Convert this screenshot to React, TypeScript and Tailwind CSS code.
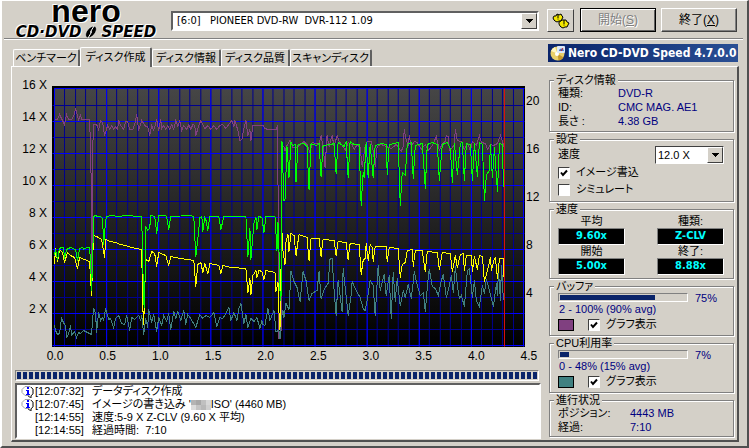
import type { ReactNode } from "react";

const tabs = [
  { label: "ベンチマーク", width: "w-[67px]" },
  { label: "ディスク作成", width: "w-[72px]", active: true },
  { label: "ディスク情報", width: "w-[69px]" },
  { label: "ディスク品質", width: "w-[69px]" },
  { label: "スキャンディスク", width: "w-[82px]" },
];

const speedLabels = ["16 X", "14 X", "12 X", "10 X", "8 X", "6 X", "4 X", "2 X"];
const rpmLabels = ["20", "16", "12", "8", "4"];
const sizeLabels = ["0.0", "0.5", "1.0", "1.5", "2.0", "2.5", "3.0", "3.5", "4.0", "4.5"];

const bufferLine =
  "54,119 57,119 59,114 61,118 64,124 66,114 68,119 71,119 73,116 75,108 77,116 78,119 80,115 81,119 89,119 90,148 91,206 91,280 92,280 92,152 93,124 96,124 98,129 100,120 102,122 104,135 107,125 109,129 111,125 113,129 115,126 117,129 118,120 120,125 123,129 125,121 127,121 129,129 132,129 134,124 136,114 138,130 141,120 143,123 145,126 147,126 149,135 151,125 153,130 156,119 158,130 160,119 161,128 163,125 165,129 167,125 169,129 171,124 173,129 175,120 177,126 179,120 181,130 183,125 186,129 188,124 190,129 192,124 194,125 195,135 198,125 200,120 202,124 204,128 207,125 210,129 213,125 216,129 219,125 222,124 225,128 228,124 231,120 233,126 234,120 237,130 239,140 241,139 243,128 245,120 247,135 249,129 250,140 252,125 262,125 264,128 267,129 275,129 277,125 277,178 278,338 280,338 281,145 283,146 284,150 286,145 289,140 292,147 296,147 299,144 303,141 306,144 309,152 311,142 315,143 318,144 320,135 322,146 324,167 326,135 328,146 331,135 333,146 336,135 338,141 342,146 344,150 347,142 351,144 353,149 356,144 359,147 361,166 364,146 366,141 370,141 372,150 374,166 376,146 380,144 385,146 390,148 395,144 400,151 402,146 403,129 405,140 407,144 408,135 410,146 413,141 416,142 420,149 424,144 427,150 431,145 435,136 438,150 441,143 444,141 445,135 447,136 448,150 451,147 453,144 454,129 456,140 460,141 463,149 466,143 469,150 471,141 475,145 478,135 480,142 484,143 486,149 489,144 492,145 496,143 499,135 501,141 503,148";

const writeLine =
  "54,255 55,249 57,259 59,248 61,247 63,247 64,258 66,249 70,247 75,249 77,260 79,248 82,247 83,249 86,247 89,247 90,262 91,290 92,262 93,216 95,215 97,216 100,216 102,218 103,244 105,220 106,216 110,215 119,216 124,215 141,216 142,260 143,303 144,307 145,226 147,230 149,228 150,215 154,216 156,233 158,215 165,215 166,217 168,229 170,216 190,215 193,216 195,256 198,229 199,217 201,216 202,231 204,217 205,219 207,230 209,216 218,216 220,229 223,216 245,216 247,256 249,228 250,259 253,223 255,217 256,229 258,216 261,217 263,232 265,216 274,216 276,250 277,222 278,250 279,290 280,300 281,141 282,172 283,200 284,199 286,146 288,177 290,142 292,145 294,144 295,181 297,144 303,143 306,146 308,189 310,143 315,145 318,143 320,176 322,145 330,144 333,143 335,173 337,142 343,146 345,141 347,177 349,141 353,144 358,144 360,205 362,172 363,177 365,142 367,177 369,144 372,177 374,145 380,143 385,144 386,174 388,144 393,143 397,142 399,205 401,172 404,175 406,144 410,142 412,178 414,145 421,143 424,188 426,144 431,142 436,144 438,180 441,144 446,142 449,148 451,182 453,143 456,174 459,143 461,142 463,180 465,143 469,144 471,180 473,143 476,176 478,142 481,144 483,200 485,174 488,170 489,144 491,177 493,147 496,191 498,143 501,144 502,187";

const rpmLine =
  "54,264 55,248 57,261 59,249 62,252 64,262 67,252 70,255 74,257 77,268 79,257 84,259 89,261 91,295 92,260 93,235 96,236 101,239 104,257 105,239 110,241 115,242 120,244 128,246 135,248 141,249 142,305 143,324 145,259 148,261 151,251 154,253 156,266 158,252 165,255 168,265 170,256 180,258 193,260 195,286 197,264 200,262 202,272 204,263 207,273 209,263 214,264 218,265 220,273 222,265 230,267 245,268 247,292 249,278 250,294 252,275 255,270 256,277 258,270 261,271 263,279 265,270 274,272 275,291 277,282 278,312 279,329 280,270 281,232 282,250 284,264 285,242 287,234 288,251 290,233 293,235 295,255 298,234 306,237 308,260 310,238 318,238 320,256 322,239 333,240 335,255 337,241 345,242 347,259 349,243 358,244 360,274 362,260 364,258 365,243 367,260 369,244 371,247 372,261 374,246 385,246 386,261 388,247 397,248 399,277 401,264 404,262 406,250 411,249 412,266 414,250 421,250 424,271 426,251 436,252 438,269 441,252 449,253 451,271 454,255 456,267 459,254 462,253 463,270 465,255 470,255 471,271 473,256 476,269 478,255 481,256 483,281 486,270 487,266 489,257 490,270 493,258 494,257 496,278 498,258 502,258 502,276";

const cpuLine =
  "54,325 55,330 57,334 59,333 61,318 64,324 65,325 66,337 68,334 70,325 71,335 74,331 76,337 78,332 80,333 83,330 87,332 91,334 92,320 93,308 95,313 96,332 98,312 100,320 102,317 103,320 105,308 108,319 110,318 113,327 115,318 118,315 121,323 124,324 126,315 129,330 131,317 134,319 138,315 140,320 141,315 143,334 145,318 147,327 148,309 151,322 153,314 156,331 158,317 161,325 163,315 166,321 168,313 170,329 173,311 175,318 177,311 180,320 183,310 185,324 187,314 190,318 195,327 199,314 202,318 205,315 209,317 213,312 216,326 219,317 222,318 225,313 228,307 230,320 233,312 236,320 238,308 240,303 243,323 245,314 247,327 250,318 253,321 256,317 259,328 261,320 262,324 264,325 267,308 269,320 273,310 275,331 278,330 279,338 280,320 282,310 283,317 285,303 288,309 290,271 293,281 296,287 299,301 302,271 305,280 308,300 311,293 316,290 318,271 320,298 323,289 327,283 329,258 331,258 333,290 335,315 337,280 339,295 341,311 342,268 345,295 347,315 350,295 351,281 355,290 359,297 362,308 364,310 366,300 369,280 372,285 374,315 377,265 379,290 383,274 385,295 388,275 390,318 392,272 394,301 396,278 399,305 402,290 404,297 407,284 410,298 412,281 413,271 416,285 419,295 422,292 424,311 427,276 428,269 431,286 434,288 437,295 440,280 442,274 445,297 448,285 450,275 452,292 454,266 456,285 458,298 460,295 463,306 466,270 468,268 471,297 473,280 475,300 478,306 481,285 483,293 485,279 488,290 492,306 495,283 496,295 497,270 499,300 500,265 502,300";

function range(count: number) {
  return Array.from({ length: count }, (_, i) => i);
}

const minorGrid = [
  ...range(46).map((i) => `M${54 + Math.round(i * 10.4)} 88v258`),
  ...range(8).map((i) => `M52 ${105 + i * 32}h471`),
].join("");

const majorGrid = [
  ...range(10).map((i) => `M${54 + i * 52} 88v258`),
  ...range(8).map((i) => `M52 ${121 + i * 32}h471`),
  "M54 88h469",
].join("");

function SpeedChart() {
  return (
    <svg
      viewBox="52 86 472 261"
      preserveAspectRatio="none"
      shapeRendering="crispEdges"
      className="block h-[261px] w-full"
      role="img"
      aria-label="速度グラフ"
    >
      <defs>
        <linearGradient id="plot" x1="0" y1="0" x2="0" y2="1">
          <stop offset="0" stopColor="#464646" />
          <stop offset="1" stopColor="#000" />
        </linearGradient>
      </defs>
      <rect x="52" y="86" width="472" height="261" fill="#000" />
      <rect x="54" y="88" width="469" height="258" fill="url(#plot)" />
      <g fill="none" strokeWidth="1" transform="translate(0.5 0.5)">
        <path d={minorGrid} stroke="#000090" vectorEffect="non-scaling-stroke" />
        <path d={majorGrid} stroke="#0000ff" vectorEffect="non-scaling-stroke" />
        <polyline points={bufferLine} stroke="#804080" />
        <polyline points={cpuLine} stroke="#408080" />
        <polyline points={rpmLine} stroke="#ffff00" />
        <polyline points={writeLine} stroke="#00ff00" />
        <path d="M503 88v258" stroke="#e01010" vectorEffect="non-scaling-stroke" />
      </g>
    </svg>
  );
}

function Arrow() {
  return (
    <span className="pointer-events-none flex w-4 shrink-0 items-center justify-center border border-t-white border-r-[#404040] border-b-[#404040] border-l-white bg-[#d4d0c8]">
      <svg width="7" height="4" viewBox="0 0 7 4" shapeRendering="crispEdges">
        <path d="M0 0h7L3.500 4z" fill="#000" />
      </svg>
    </span>
  );
}

function Group({ title, className, children }: { title: string; className: string; children: ReactNode }) {
  return (
    <fieldset
      className={`min-w-0 border border-[#808080] pr-[9px] pl-2 shadow-[1px_1px_0_#fff,inset_1px_1px_0_#fff] ${className}`}
    >
      <legend className="-ml-1 bg-[#d4d0c8] px-[2px] leading-3">{title}</legend>
      {children}
    </fieldset>
  );
}

function Row({ name, value, className }: { name: string; value: string; className: string }) {
  return (
    <div className="flex leading-[14px]">
      <dt className={className}>{name}</dt>
      <dd className="text-[#000080]">{value}</dd>
    </div>
  );
}

function Check({ label, checked = false }: { label: string; checked?: boolean }) {
  return (
    <label className="flex h-[17px] items-center gap-[6px]">
      <span className="grid size-3">
        <input
          type="checkbox"
          defaultChecked={checked}
          className="peer col-start-1 row-start-1 size-3 appearance-none border border-t-[#404040] border-r-white border-b-white border-l-[#404040] bg-white"
        />
        <svg
          viewBox="0 0 12 12"
          className="pointer-events-none invisible col-start-1 row-start-1 size-3 peer-checked:visible"
        >
          <path d="M3 5.500l2 2.500 4-4.500" fill="none" stroke="#000" strokeWidth="2" />
        </svg>
      </span>
      {label}
    </label>
  );
}

function Readout({ name, value }: { name: string; value: string }) {
  return (
    <div>
      <dt className="text-center leading-[13px]">{name}</dt>
      <dd className="h-[17px] border border-t-[#808080] border-r-white border-b-white border-l-[#808080] bg-black text-center font-['DejaVu_Sans_Condensed','DejaVu_Sans',sans-serif] text-[11px] leading-[14px] font-bold text-[#00ffff]">
        {value}
      </dd>
    </div>
  );
}

function Usage({ percent, range: text, swatch }: { percent: number; range: string; swatch: string }) {
  return (
    <>
      <div className="flex h-[11px] items-center gap-[7px] text-[#000080]">
        <div className="h-[9px] w-[130px] border border-t-[#808080] border-r-white border-b-white border-l-[#808080] p-px">
          <div className="h-full bg-[#0a246a]" style={{ width: `${percent}%` }} />
        </div>
        <span className="leading-3">{percent}%</span>
      </div>
      <p className="pl-px leading-[13px] text-[#000080]">{text}</p>
      <div className="flex items-center gap-[14px]">
        <span className={`h-3 w-4 border border-black ${swatch}`} />
        <Check label="グラフ表示" checked />
      </div>
    </>
  );
}

function Logo() {
  return (
    <div className="w-[148px] text-center text-black [text-shadow:1px_1px_0_#fff,-1px_-1px_0_#fff]">
      <div className="h-6 font-['Liberation_Sans',sans-serif] text-[32px] leading-5 font-bold">nero</div>
      <div className="flex h-[14px] items-center justify-center font-['DejaVu_Sans',sans-serif] text-[15px] leading-[14px] font-bold italic">
        <span>CD·DVD</span>
        <svg width="20" height="14" viewBox="0 0 20 14">
          <ellipse cx="10" cy="7" rx="7" ry="4" transform="rotate(-50 10 7)" fill="#000" stroke="#fff" strokeWidth="0.500" />
          <path d="M13 1L10 6M10 8L7 13" stroke="#fff" strokeWidth="1" />
          <circle cx="10" cy="7" r="1" fill="#fff" />
        </svg>
        <span>SPEED</span>
      </div>
    </div>
  );
}

function Header() {
  return (
    <header className="flex h-[37px] items-start pr-[10px] pl-[10px]">
      <Logo />
      <div className="mt-[10px] ml-[11px] flex h-5 min-w-0 flex-1 border-2 border-t-[#606060] border-r-white border-b-white border-l-[#606060] bg-white">
        <select
          aria-label="ドライブ"
          className="min-w-0 flex-1 appearance-none bg-white pl-1 font-['DejaVu_Sans_Condensed','DejaVu_Sans',sans-serif] text-[11px] leading-4 whitespace-pre"
        >
          <option>{"[6:0]\u00a0\u00a0 PIONEER DVD-RW\u00a0 DVR-112 1.09"}</option>
        </select>
        <Arrow />
      </div>
      <button
        type="button"
        aria-label="オプション"
        className="mt-2 ml-2 flex h-[23px] w-[27px] items-center justify-center border border-t-white border-r-[#404040] border-b-[#404040] border-l-white"
      >
        <svg width="18" height="16" viewBox="0 0 18 16">
          <g fill="#f4e800" stroke="#000" strokeWidth="1">
            <path d="M2 3l2 0 1-2 2 1 2-1 1 2 1 1-1 2-1 2-2 0-2 1-2-1-1-1-1-2z" />
            <path d="M7 9l2-1 1-1 2 0 2 0 1 2 2 1-1 2-1 2-2 0-2 1-2-1-1-1-1-2z" />
          </g>
          <path d="M6 1v4M12 7v4" stroke="#000" strokeWidth="1" />
          <path d="M5 6h2M11 12h2" stroke="#8a8200" strokeWidth="1" />
        </svg>
      </button>
      <button
        type="button"
        disabled
        className="mt-[7px] ml-[6px] h-6 w-[76px] border border-black text-[12px] text-[#808080] shadow-[inset_1px_1px_0_#fff,inset_-1px_-1px_0_#606060] [text-shadow:1px_1px_0_#fff]"
      >
        開始(<u>S</u>)
      </button>
      <button
        type="button"
        className="mt-[7px] ml-[5px] h-6 w-[76px] border border-t-white border-r-[#404040] border-b-[#404040] border-l-white text-[12px] shadow-[inset_-1px_-1px_0_#808080]"
      >
        終了(<u>X</u>)
      </button>
    </header>
  );
}

function TabBar() {
  return (
    <div className="flex h-[26px] items-end justify-between pr-[9px] pl-[11px]">
      <div role="tablist" className="flex items-end">
        {tabs.map((tab) => (
          <button
            key={tab.label}
            type="button"
            role="tab"
            aria-selected={!!tab.active}
            className={`rounded-t-[2px] border-t border-r-2 border-l border-t-white border-r-[#606060] border-l-white text-center whitespace-nowrap ${tab.width} ${
              tab.active ? "-mb-px h-5 bg-[#d4d0c8] pb-px" : "h-[17px]"
            }`}
          >
            {tab.label}
          </button>
        ))}
      </div>
      <h1 className="mb-1 flex h-[18px] w-[190px] items-center gap-[2px] bg-gradient-to-r from-[#0a246a] to-[#2a4f94] pl-[2px] font-['DejaVu_Sans_Condensed','DejaVu_Sans',sans-serif] text-[12px] leading-[18px] font-bold whitespace-nowrap text-white">
        <svg width="16" height="16" viewBox="0 0 16 16" className="shrink-0">
          <circle cx="7.500" cy="8.500" r="7" fill="#e8cf6a" />
          <path d="M7.500 8.500L1 6a7 7 0 0 1 4-4z" fill="#fff6c0" />
          <path d="M7.500 8.500l6 4a7 7 0 0 1-5 3z" fill="#c79a2c" />
          <circle cx="7" cy="9" r="2" fill="#fff" />
          <rect x="7" y="1" width="8" height="7" rx="1" fill="#dce8f8" />
          <path d="M9 6a2.500 2.500 0 0 1 5 0z" fill="#3f78c8" />
          <path d="M11 6l2-3" stroke="#d02020" strokeWidth="1" />
        </svg>
        Nero CD-DVD Speed 4.7.0.0
      </h1>
    </div>
  );
}

function InfoIcon() {
  return (
    <svg width="13" height="13" viewBox="0 0 13 13" className="shrink-0">
      <path d="M4 1.500h5l3 3v4l-2 2v2l-2-2H4l-3-3v-3z" fill="#fff" stroke="#a0a0a0" strokeWidth="1" />
      <path d="M10 2l2 2v5l-2 2v2L7 11" fill="none" stroke="#303030" strokeWidth="1" />
      <path d="M6 2h2v2H6zM5 5h3v4h1v1H5V9h1V6H5z" fill="#0000ff" />
    </svg>
  );
}

const mosaic = [
  "bg-[#b4b4b4]", "bg-[#a8a8a8]", "bg-[#c0c0c0]", "bg-[#d8d8d8]",
  "bg-[#dcdcdc]", "bg-[#c4c4c4]", "bg-[#b8b8b8]", "bg-[#d0d0d0]",
];

const log: { time: string; icon?: boolean; text: ReactNode }[] = [
  { time: "[12:07:32]", icon: true, text: "データディスク作成" },
  {
    time: "[12:07:45]",
    icon: true,
    text: (
      <>
        イメージの書き込み '
        <span className="inline-grid w-5 grid-cols-4 align-middle">
          {mosaic.map((shade) => (
            <span key={shade} className={`h-[5px] ${shade}`} />
          ))}
        </span>
        ISO' (4460 MB)
      </>
    ),
  },
  { time: "[12:14:55]", text: "速度:5-9 X Z-CLV (9.60 X 平均)" },
  { time: "[12:14:55]", text: <>経過時間:&nbsp; 7:10</> },
];

function ChartPane() {
  return (
    <section className="min-w-0 flex-1 pr-2">
      <div className="flex text-[12px]">
        <div className="w-[35px] shrink-0 pt-[2px] text-right">
          {speedLabels.map((label) => (
            <div key={label} className="h-8 leading-8">
              {label}
            </div>
          ))}
        </div>
        <div className="min-w-0 flex-1 pt-[19px] pl-[5px]">
          <SpeedChart />
        </div>
        <div className="w-4 shrink-0 pt-[10px] pl-px">
          {rpmLabels.map((label) => (
            <div key={label} className="h-12 leading-[48px]">
              {label}
            </div>
          ))}
        </div>
      </div>
      <div className="flex h-[23px] justify-between pl-[31px] text-center text-[12px] leading-[18px]">
        {sizeLabels.map((label) => (
          <span key={label} className="w-6">
            {label}
          </span>
        ))}
      </div>
      <div className="mr-[2px] ml-[3px] h-[11px] border border-t-[#808080] border-r-white border-b-white border-l-[#808080] p-px">
        <div className="h-full bg-[repeating-linear-gradient(to_right,#0a246a_0_4px,#d4d0c8_4px_6px)]" />
      </div>
      <ul className="mt-[2px] ml-[3px] border-2 border-t-[#606060] border-r-white border-b-white border-l-[#606060] bg-white pl-1">
        {log.map((entry, index) => (
          <li key={index} className="flex h-[13px] leading-[13px]">
            <span className="w-[14px] shrink-0">{entry.icon && <InfoIcon />}</span>
            <time className="w-[57px] shrink-0">{entry.time}</time>
            <span className="whitespace-nowrap">{entry.text}</span>
          </li>
        ))}
      </ul>
    </section>
  );
}

function SidePane() {
  return (
    <aside className="flex w-[185px] shrink-0 flex-col gap-px pt-[7px]">
      <Group title="ディスク情報" className="pb-[3px]">
        <dl>
          <Row name="種類:" value="DVD-R" className="w-[60px]" />
          <Row name="ID:" value="CMC MAG. AE1" className="w-[60px]" />
          <Row name="長さ :" value="4.38 GB" className="w-[60px]" />
        </dl>
      </Group>
      <Group title="設定" className="pb-[3px]">
        <div className="flex justify-between pt-px">
          <label htmlFor="speed" className="leading-4">
            速度
          </label>
          <div className="flex h-[18px] w-[69px] border border-t-[#404040] border-r-white border-b-white border-l-[#404040] bg-white">
            <select id="speed" className="min-w-0 flex-1 appearance-none bg-white pl-[2px] leading-4">
              <option>12.0 X</option>
            </select>
            <Arrow />
          </div>
        </div>
        <Check label="イメージ書込" checked />
        <Check label="シミュレート" />
      </Group>
      <Group title="速度" className="pb-[3px]">
        <dl className="grid grid-cols-[67px_67px] justify-between">
          <Readout name="平均" value="9.60x" />
          <Readout name="種類:" value="Z-CLV" />
          <Readout name="開始" value="5.00x" />
          <Readout name="終了:" value="8.88x" />
        </dl>
      </Group>
      <Group title="バッファ" className="pb-[2px]">
        <Usage percent={75} range="2 - 100% (90% avg)" swatch="bg-[#804080]" />
      </Group>
      <Group title="CPU利用率" className="pb-[2px]">
        <Usage percent={7} range="0 - 48% (15% avg)" swatch="bg-[#408080]" />
      </Group>
      <Group title="進行状況" className="pb-[2px]">
        <dl>
          <Row name="ポジション:" value="4443 MB" className="w-[72px]" />
          <Row name="経過:" value="7:10" className="w-[72px]" />
        </dl>
      </Group>
    </aside>
  );
}

export default function App() {
  return (
    <div className="min-h-screen border-t border-r-2 border-b-2 border-l-2 border-t-white border-r-[#505050] border-b-[#505050] border-l-white bg-[#d4d0c8] font-['Liberation_Sans','Noto_Sans_CJK_JP',sans-serif] text-[11px] text-black [font-feature-settings:'palt']">
      <Header />
      <div className="mr-1 ml-[2px] h-[2px] border-t border-b border-t-[#808080] border-b-white" />
      <TabBar />
      <main className="mr-2 mb-1 ml-[9px] flex border-t border-r-2 border-b-2 border-l border-t-white border-r-[#505050] border-b-[#505050] border-l-white pr-[3px] pb-px">
        <ChartPane />
        <SidePane />
      </main>
    </div>
  );
}
